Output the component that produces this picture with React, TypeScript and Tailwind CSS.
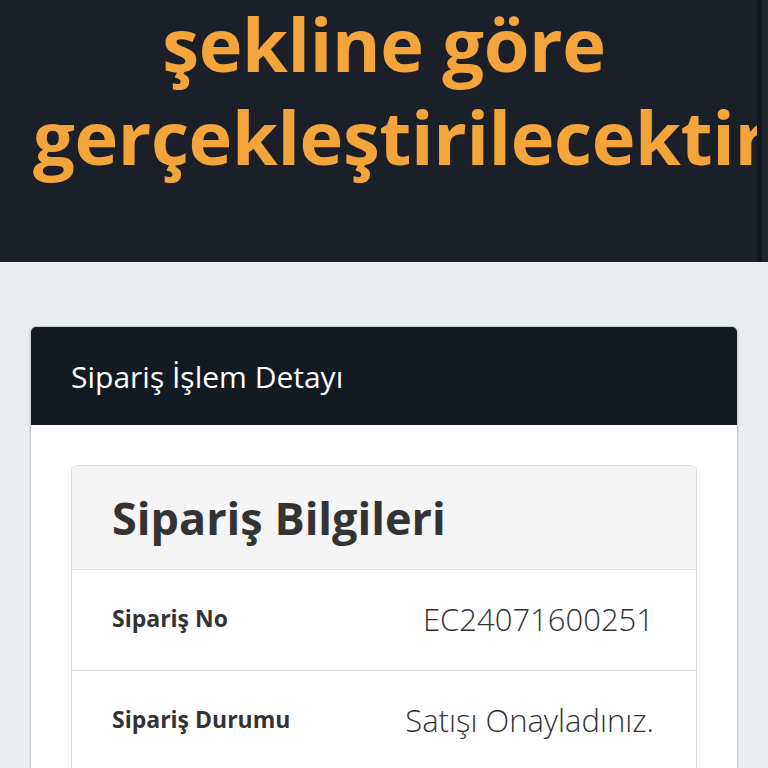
import type { ReactNode } from "react";

const font = { fontFamily: '"Open Sans", "Noto Sans", sans-serif' };

function InfoRow({ label, children }: { label: string; children: ReactNode }) {
  return (
    <div className="flex h-[101px] items-center justify-between border-b border-[#e3e3e3] pl-[40px] pr-[42px]">
      <span className="-mt-[4px] text-[23px] font-bold text-[#333]">{label}</span>
      <span className="-mt-[2px] text-[31px] font-light text-[#333]">{children}</span>
    </div>
  );
}

export default function App() {
  return (
    <div className="min-h-screen bg-[#eaedf0]" style={font}>
      <section className="relative h-[262px] overflow-hidden bg-[#1b1f28] px-[33px] text-center">
        <h1 className="-mt-[3px] text-[74px] font-bold leading-[93px] tracking-[-0.4px] text-[#f3a53c]">
          şekline göre gerçekleştirilecektir.
        </h1>
        {/* page scrollbar track */}
        <div className="absolute right-0 top-0 flex h-full w-[11px]">
          <div className="h-full w-[5px] bg-[#131820]" />
          <div className="h-full w-[6px] bg-[#1e232c]" />
        </div>
      </section>

      <div className="mx-[30px] mt-[64px] overflow-hidden rounded-t-[6px] border border-[#c9cdd2] bg-white shadow-sm">
        <div className="flex h-[98px] items-center bg-[#141a21] px-[40px]">
          <h2 className="text-[30px] font-normal text-white">Sipariş İşlem Detayı</h2>
        </div>

        <div className="px-[40px] pb-[40px] pt-[40px]">
          <div className="overflow-hidden rounded-[6px] border border-[#dcdcdc]">
            <div className="flex h-[104px] items-center border-b border-[#dcdcdc] bg-[#f5f5f5] px-[40px]">
              <h3 className="text-[45px] font-bold text-[#333]">Sipariş Bilgileri</h3>
            </div>
            <InfoRow label="Sipariş No">EC24071600251</InfoRow>
            <InfoRow label="Sipariş Durumu">Satışı Onayladınız.</InfoRow>
            <InfoRow label="Sipariş Tarihi">16.07.2024</InfoRow>
          </div>
        </div>
      </div>
    </div>
  );
}
